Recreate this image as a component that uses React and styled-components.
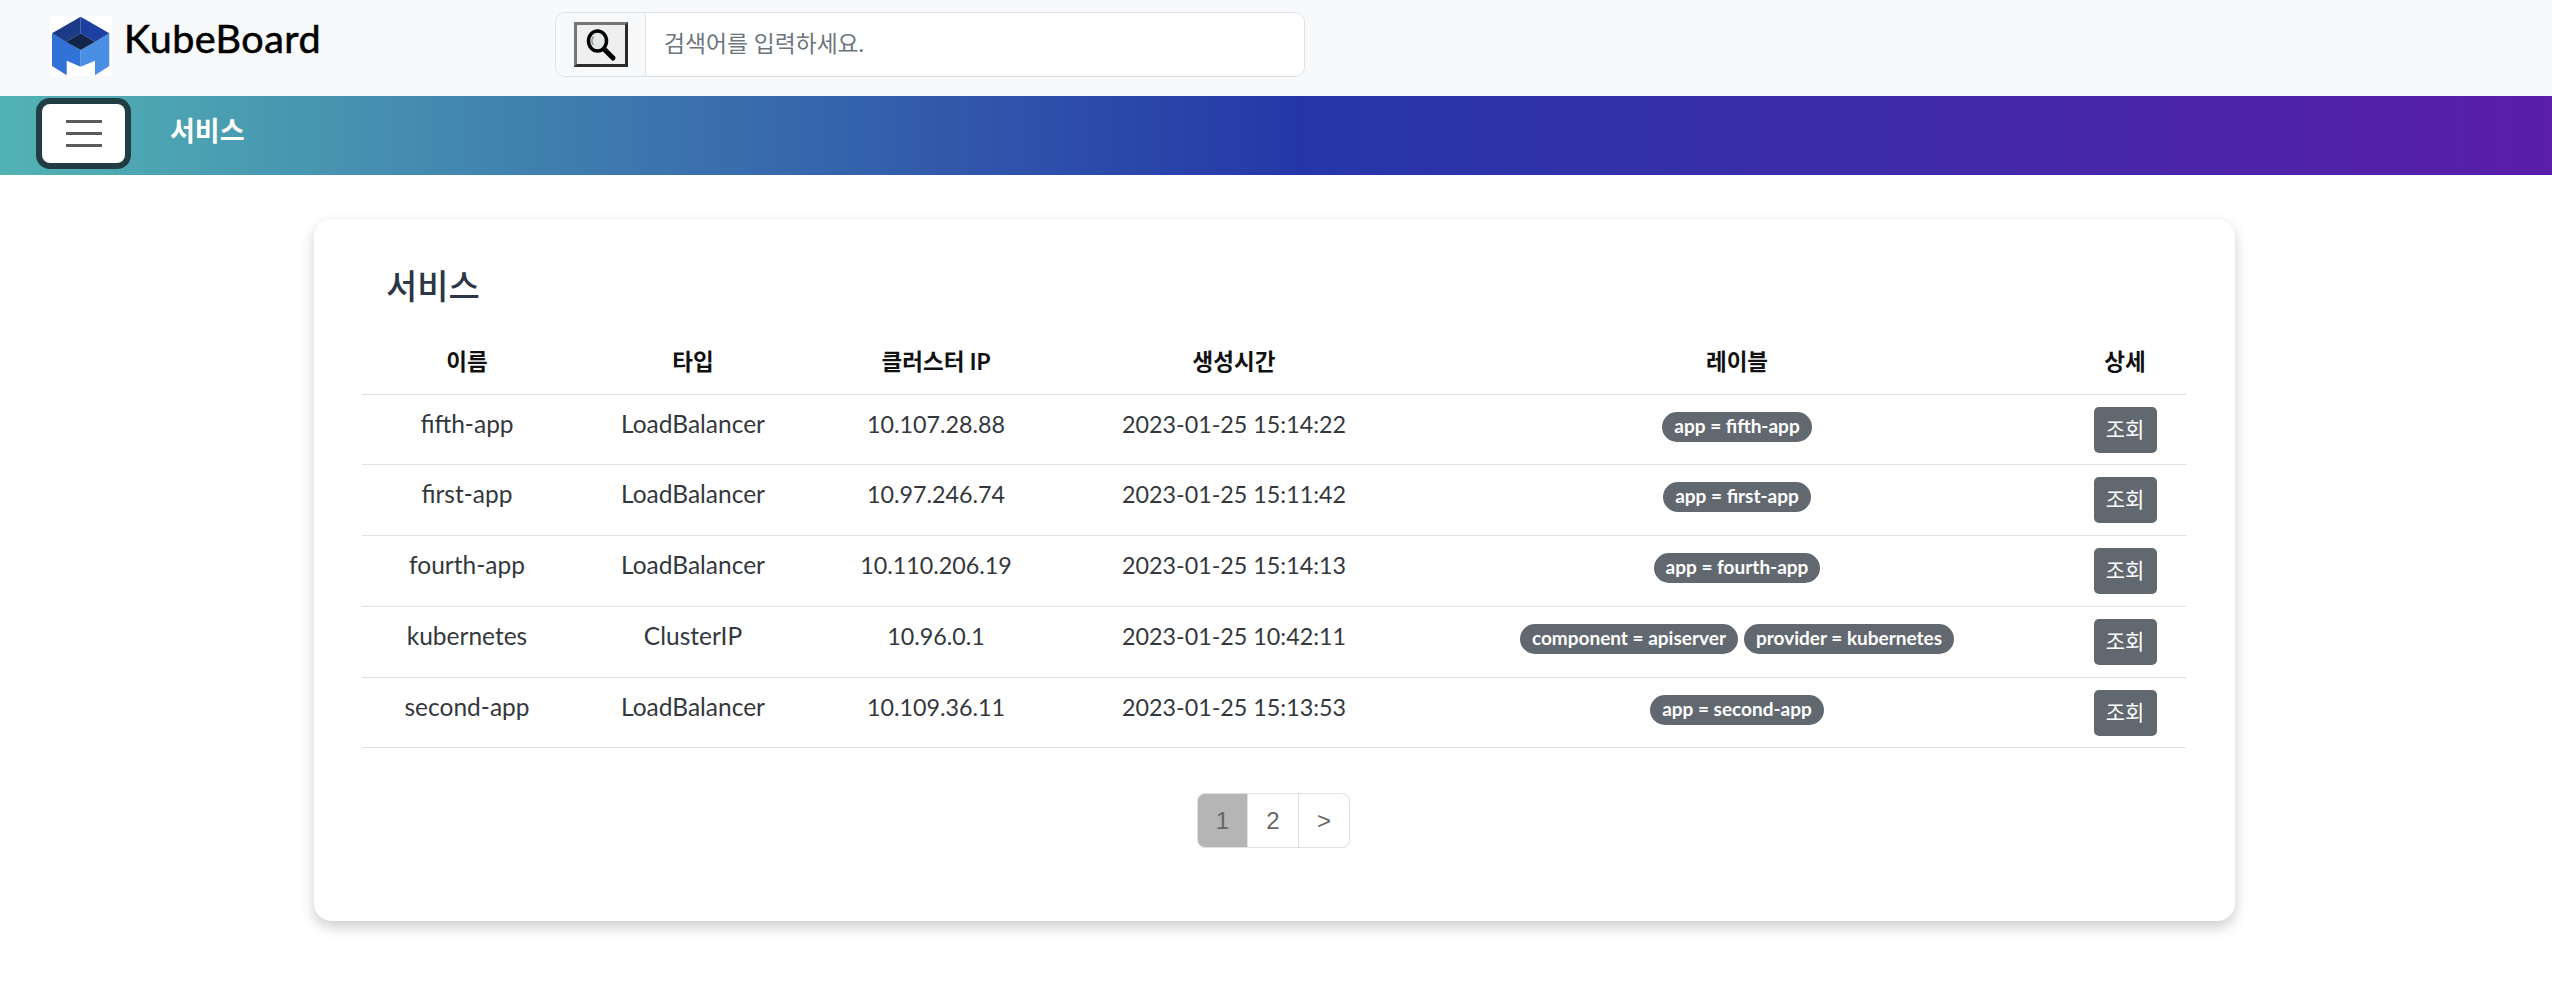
import React from 'react'
import styled, { createGlobalStyle } from 'styled-components'

const GlobalStyle = createGlobalStyle`
  html, body {
    margin: 0;
    padding: 0;
    background: #fff;
    font-family: Lato, "Noto Sans CJK KR", sans-serif;
  }
  * { box-sizing: border-box; }
`

const Page = styled.div`
  min-height: 994px;
`

const Header = styled.header`
  height: 96px;
  background: #f8f9fa;
  display: flex;
  align-items: flex-start;
  padding: 12px 0 0 50px;
`

const Brand = styled.a`
  display: flex;
  align-items: flex-start;
  width: 505px;
  height: 66px;
  padding-top: 4px;
  font-size: 39.5px;
  line-height: 44px;
  font-weight: 400;
  color: #000;
  -webkit-text-stroke: 0.6px #000;
  letter-spacing: 0.5px;
`

const LogoBox = styled.svg`
  width: 62px;
  height: 60px;
  margin-right: 12px;
  flex: none;
`

const SearchGroup = styled.div`
  width: 750px;
  height: 65px;
  display: flex;
  border: 1px solid #dee2e6;
  border-radius: 10px;
  background: #fff;
  overflow: hidden;
`

const SearchAddon = styled.div`
  width: 90px;
  background: #f8f9fa;
  border-right: 1px solid #dee2e6;
  display: flex;
  align-items: center;
  justify-content: center;
`

const SearchButton = styled.button`
  width: 54px;
  height: 45px;
  padding: 0;
  background: #efefef;
  border: 3px solid;
  border-color: #767676 #2b2b2b #2b2b2b #767676;
  display: flex;
  align-items: center;
  justify-content: center;
`

const SearchInput = styled.input`
  flex: 1;
  border: 0;
  outline: 0;
  padding: 0 18px 3px;
  font-family: inherit;
  font-size: 22.8px;
  color: #212529;
  &::placeholder { color: #6c757d; opacity: 1; }
`

const NavBar = styled.nav`
  height: 79px;
  display: flex;
  align-items: flex-start;
  padding: 8px 0 0 42px;
  background: linear-gradient(90deg, #52b3b3 0%, #2537a8 51%, #5a1ea8 100%);
`

const MenuButton = styled.button`
  width: 83px;
  height: 59px;
  border: 0;
  border-radius: 8px;
  background: #fff;
  box-shadow: 0 0 0 6px #1f3d43;
  display: flex;
  flex-direction: column;
  align-items: center;
  justify-content: center;
  gap: 9px;
  padding: 0;
`

const MenuLine = styled.span`
  width: 36px;
  height: 3px;
  background: #5a5a5a;
`

const NavTitle = styled.h2`
  margin: 5px 0 0 45px;
  font-size: 27px;
  line-height: 44px;
  font-weight: 700;
  color: #fff;
`

const Card = styled.main`
  width: 1921px;
  height: 702px;
  margin: 44px 0 0 314px;
  padding: 46px 49px 0 48px;
  background: #fff;
  border-radius: 18px;
  box-shadow: 0 6px 14px rgba(0, 0, 0, 0.2);
`

const CardTitle = styled.h1`
  margin: 0 0 24px 24px;
  font-size: 34px;
  line-height: 42px;
  font-weight: 500;
  color: #2b3648;
`

const Table = styled.table`
  width: 1824px;
  table-layout: fixed;
  border-collapse: collapse;
  color: #33383d;
`

const Col = styled.col`
  width: ${({ $w }) => $w}px;
`

const Th = styled.th`
  height: 63px;
  padding: 0 0 4px;
  font-size: 22.5px;
  font-weight: 700;
  text-align: center;
  border-bottom: 1px solid #dee2e6;
  color: #111;
`

const Td = styled.td`
  height: 70.75px;
  padding: 12px 0 0;
  font-size: ${({ $digits }) => ($digits ? 23.3 : 24.5)}px;
  line-height: 34px;
  text-align: center;
  vertical-align: top;
  border-bottom: 1px solid #dee2e6;
`

const Labels = styled.div`
  display: flex;
  justify-content: center;
  gap: 6px;
  padding-top: 5px;
`

const Badge = styled.span`
  height: 30px;
  padding: 0 12px;
  border-radius: 15px;
  background: #62686f;
  color: #fff;
  font-size: 19px;
  line-height: 28px;
  font-weight: 700;
  white-space: nowrap;
`

const DetailButton = styled.button`
  display: block;
  width: 63px;
  height: 46px;
  margin: 0 auto;
  padding: 0 0 4px;
  border: 0;
  border-radius: 5px;
  background: #62686f;
  color: #fff;
  font-family: inherit;
  font-size: 21px;
`

const Pagination = styled.ul`
  display: flex;
  justify-content: center;
  list-style: none;
  margin: 45px 0 0;
  padding: 0 1px 0 0;
`

const PageItem = styled.li`
  width: 51px;
  height: 55px;
  display: flex;
  align-items: center;
  justify-content: center;
  font-family: "Liberation Sans", sans-serif;
  font-size: 24px;
  color: #666;
  background: ${({ $active }) => ($active ? '#b5b5b5' : '#fff')};
  border: 1px solid #dee2e6;
  border-left-width: ${({ $first }) => ($first ? 1 : 0)}px;
  &:first-child { border-radius: 8px 0 0 8px; }
  &:last-child { border-radius: 0 8px 8px 0; }
`

const services = [
  { name: 'fifth-app', type: 'LoadBalancer', ip: '10.107.28.88', created: '2023-01-25 15:14:22', labels: ['app = fifth-app'] },
  { name: 'first-app', type: 'LoadBalancer', ip: '10.97.246.74', created: '2023-01-25 15:11:42', labels: ['app = first-app'] },
  { name: 'fourth-app', type: 'LoadBalancer', ip: '10.110.206.19', created: '2023-01-25 15:14:13', labels: ['app = fourth-app'] },
  { name: 'kubernetes', type: 'ClusterIP', ip: '10.96.0.1', created: '2023-01-25 10:42:11', labels: ['component = apiserver', 'provider = kubernetes'] },
  { name: 'second-app', type: 'LoadBalancer', ip: '10.109.36.11', created: '2023-01-25 15:13:53', labels: ['app = second-app'] },
]

const columns = [
  { title: '이름', width: 210 },
  { title: '타입', width: 242 },
  { title: '클러스터 IP', width: 244 },
  { title: '생성시간', width: 352 },
  { title: '레이블', width: 654 },
  { title: '상세', width: 122 },
]

const Logo = () => (
  <LogoBox viewBox="0 0 62 60">
    <rect width="62" height="60" fill="#fff" />
    <polygon points="2,17.3 30.7,34 30.7,50.7 16.7,44.7 16.7,59.3 2,50" fill="#3272d6" />
    <polygon points="59.3,17.3 30.7,34 30.7,50.7 45,44.7 45,59.3 59.3,50" fill="#4a8fe3" />
    <polygon points="30.7,0.7 2,17.3 16,25.7 30.7,17.3" fill="#1d3a86" />
    <polygon points="30.7,0.7 59.3,17.3 45,25.7 30.7,17.3" fill="#1c40a2" />
    <polygon points="30.7,17.3 16,25.7 30.7,34 45,25.7" fill="#12264c" />
  </LogoBox>
)

const SearchIcon = () => (
  <svg width="32" height="34" viewBox="0 0 32 34">
    <ellipse cx="12.5" cy="13" rx="9" ry="10" fill="#e4e8e8" stroke="#000" strokeWidth="3.5" />
    <path d="M8.5 8.5 A7 7 0 0 0 8.5 17" fill="none" stroke="#9a9a9a" strokeWidth="1.5" />
    <line x1="20" y1="22" x2="28" y2="30" stroke="#000" strokeWidth="5" strokeLinecap="round" />
  </svg>
)

const App = () => {
  return (
    <Page>
      <GlobalStyle />
      <Header>
        <Brand>
          <Logo />
          KubeBoard
        </Brand>
        <SearchGroup>
          <SearchAddon>
            <SearchButton>
              <SearchIcon />
            </SearchButton>
          </SearchAddon>
          <SearchInput placeholder="검색어를 입력하세요." />
        </SearchGroup>
      </Header>
      <NavBar>
        <MenuButton>
          <MenuLine />
          <MenuLine />
          <MenuLine />
        </MenuButton>
        <NavTitle>서비스</NavTitle>
      </NavBar>
      <Card>
        <CardTitle>서비스</CardTitle>
        <Table>
          <colgroup>
            {columns.map((c) => (
              <Col key={c.title} $w={c.width} />
            ))}
          </colgroup>
          <thead>
            <tr>
              {columns.map((c) => (
                <Th key={c.title}>{c.title}</Th>
              ))}
            </tr>
          </thead>
          <tbody>
            {services.map((s) => (
              <tr key={s.name}>
                <Td>{s.name}</Td>
                <Td>{s.type}</Td>
                <Td $digits>{s.ip}</Td>
                <Td $digits>{s.created}</Td>
                <Td>
                  <Labels>
                    {s.labels.map((l) => (
                      <Badge key={l}>{l}</Badge>
                    ))}
                  </Labels>
                </Td>
                <Td>
                  <DetailButton>조회</DetailButton>
                </Td>
              </tr>
            ))}
          </tbody>
        </Table>
        <Pagination>
          <PageItem $active $first>1</PageItem>
          <PageItem>2</PageItem>
          <PageItem>&gt;</PageItem>
        </Pagination>
      </Card>
    </Page>
  )
}

export default App
